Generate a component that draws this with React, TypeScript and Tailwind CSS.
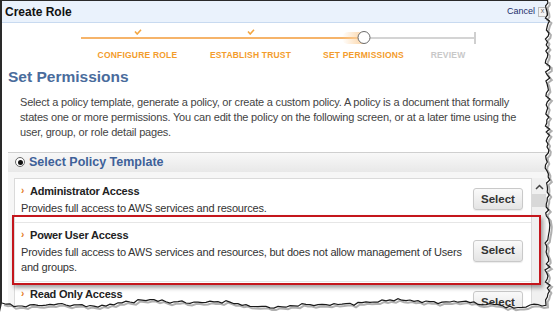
import React from "react";

const font = { fontFamily: '"Liberation Sans", Arial, sans-serif' };

function tornEdge() {
  let s = 7;
  const rnd = () => {
    s = (s * 9301 + 49297) % 233280;
    return s / 233280;
  };
  const pts: [number, number][] = [];
  for (let y = 0; y <= 300; y += 3) pts.push([545 + rnd() * 5, y]);
  for (let x = 546; x >= 0; x -= 4) {
    const wave = Math.sin(x / 37) * 2.5 + Math.sin(x / 13) * 1.2;
    pts.push([x, 302 + wave + rnd() * 3]);
  }
  return pts;
}

function TornOverlay() {
  const pts = tornEdge();
  const line = pts.map((p) => `${p[0].toFixed(1)},${p[1].toFixed(1)}`).join(" ");
  const shadow = pts.map((p) => `${(p[0] + 2).toFixed(1)},${(p[1] + 2).toFixed(1)}`).join(" ");
  const fill = `555,0 ${line} 0,312 555,312`;
  return (
    <svg className="absolute inset-0 pointer-events-none" width="555" height="312">
      <polygon points={fill} fill="#ffffff" />
      <polyline points={shadow} fill="none" stroke="#b0b0b0" strokeWidth="2" />
      <polyline points={line} fill="none" stroke="#1a1a1a" strokeWidth="1.2" />
    </svg>
  );
}

function Check() {
  return (
    <svg width="8" height="6" viewBox="0 0 8 6">
      <path d="M1 2.5 L3.2 5 L7 0.8" fill="none" stroke="#f4a640" strokeWidth="1.6" />
    </svg>
  );
}

function Step({ label, w, state }: { label: string; w: string; state: "done" | "current" | "todo" }) {
  const color = state === "todo" ? "text-[#c8c8c8]" : "text-[#f39c2c]";
  return (
    <div className={`${w} flex flex-col items-center`}>
      <div className="relative w-full h-[16px]">
        {state === "done" && <div className="absolute left-0 right-0 top-[7px] h-[2px] bg-[#f6b46a]" />}
        {state === "done" && (
          <div className="absolute left-1/2 -translate-x-1/2 top-[-1px]">
            <Check />
          </div>
        )}
        {state === "current" && (
          <>
            <div className="absolute left-0 w-1/2 top-[7px] h-[2px] bg-[#f6b46a]" />
            <div className="absolute right-0 w-1/2 top-[7px] h-[2px] bg-[#d4d4d4]" />
            <div className="absolute right-1/2 w-[22px] top-[2px] h-[12px] bg-gradient-to-r from-transparent to-[#fcd4a4] rounded-l-full" />
            <div className="absolute left-1/2 -translate-x-1/2 top-[1px] w-[13px] h-[13px] rounded-full border-[1.5px] border-[#6b6b6b] bg-white" />
          </>
        )}
        {state === "todo" && (
          <>
            <div className="absolute left-0 right-0 top-[7px] h-[2px] bg-[#d4d4d4]" />
            <div className="absolute right-0 top-[2px] w-[2px] h-[12px] bg-[#cfcfcf]" />
          </>
        )}
      </div>
      <div className={`mt-[3px] text-[8.5px] font-bold tracking-[0.2px] ${color}`}>{label}</div>
    </div>
  );
}

function SelectButton() {
  return (
    <button className="w-[50px] h-[22px] rounded-[3px] border border-[#c9c9c9] bg-gradient-to-b from-[#fafafa] to-[#e4e4e4] text-[11.5px] font-bold text-[#333] shadow-[0_1px_1px_rgba(0,0,0,0.08)]">
      Select
    </button>
  );
}

function Item({ title, desc }: { title: string; desc: React.ReactNode }) {
  return (
    <div className="flex items-center pl-[6px] pr-[8px] pt-[4px] pb-[6px] border-b border-[#e6e6e6]">
      <div className="flex-1">
        <div className="flex items-center gap-[5px] text-[11px] tracking-[-0.2px] font-bold text-[#222] leading-[16px]">
          <span className="text-[#e47a1a] text-[10px] w-[4px]">›</span>
          {title}
        </div>
        <div className="text-[11px] tracking-[-0.2px] text-[#333] leading-[15px] mt-[2px]">{desc}</div>
      </div>
      <SelectButton />
    </div>
  );
}

export default function App() {
  return (
    <div className="relative w-[555px] h-[312px] overflow-hidden bg-white" style={font}>
      <div className="h-full border-l-2 border-t border-[#2a2a2a]">
        {/* title bar */}
        <div className="h-[22px] bg-[#eaf2fc] border-b border-[#c8daf0] flex items-center justify-between pl-[3px] pr-[8px]">
          <span className="text-[12px] font-bold text-[#111]">Create Role</span>
          <div className="flex items-center gap-[3px]">
            <span className="text-[9px] text-[#1c2e6b]">Cancel</span>
            <span className="w-[9px] h-[10px] border border-[#bbb] bg-[#f4f4f4] text-[7px] text-[#666] flex items-center justify-center">x</span>
          </div>
        </div>

        {/* stepper */}
        <div className="flex pl-[79px] pt-[7px]">
          <Step label="CONFIGURE ROLE" w="w-[113px]" state="done" />
          <Step label="ESTABLISH TRUST" w="w-[113px]" state="done" />
          <Step label="SET PERMISSIONS" w="w-[113px]" state="current" />
          <Step label="REVIEW" w="w-[56px]" state="todo" />
        </div>

        <div className="pl-[6px] mt-[5px] text-[15.5px] font-bold text-[#4a6c9c] leading-[20px]">Set Permissions</div>

        <p className="pl-[18px] pr-[20px] mt-[8px] text-[11px] tracking-[-0.2px] text-[#444] leading-[15px]">
          Select a policy template, generate a policy, or create a custom policy. A policy is a document that formally
          states one or more permissions. You can edit the policy on the following screen, or at a later time using the
          user, group, or role detail pages.
        </p>

        {/* section */}
        <div className="ml-[6px] mt-[12px]">
          <div className="h-[20px] border-t border-[#cfcfcf] bg-gradient-to-b from-[#f8f8f8] to-[#e8e8e8] flex items-center pl-[7px] gap-[4px]">
            <span className="w-[10px] h-[10px] rounded-full border border-[#666] bg-white flex items-center justify-center">
              <span className="w-[5px] h-[5px] rounded-full bg-[#111]" />
            </span>
            <span className="text-[12.5px] font-bold text-[#3e6199]">Select Policy Template</span>
          </div>
          <div className="bg-[#f6f6f6] pt-[6px] pl-[6px] flex">
            <div className="w-[518px] border border-[#dadada] bg-white">
              <Item title="Administrator Access" desc="Provides full access to AWS services and resources." />
              <Item
                title="Power User Access"
                desc={
                  <>
                    <span className="whitespace-nowrap">
                      Provides full access to AWS services and resources, but does not allow management of Users
                    </span>
                    <br />
                    and groups.
                  </>
                }
              />
              <Item title="Read Only Access" desc="Provides read-only access to AWS services and resources." />
            </div>
            <div className="w-[14px] bg-[#f0f0f0] flex flex-col items-center pt-[6px]">
              <svg width="9" height="6" viewBox="0 0 9 6">
                <path d="M1 5 L4.5 1.5 L8 5" fill="none" stroke="#444" strokeWidth="1.5" />
              </svg>
              <div className="mt-[4px] w-full h-[13px] bg-[#d8d8d8]" />
            </div>
          </div>
        </div>
      </div>

      {/* annotation highlight */}
      <div className="absolute left-[12px] top-[215px] w-[529px] h-[70px] border-2 border-[#c4161c] shadow-[2px_3px_4px_rgba(0,0,0,0.35)]" />

      <TornOverlay />
    </div>
  );
}
